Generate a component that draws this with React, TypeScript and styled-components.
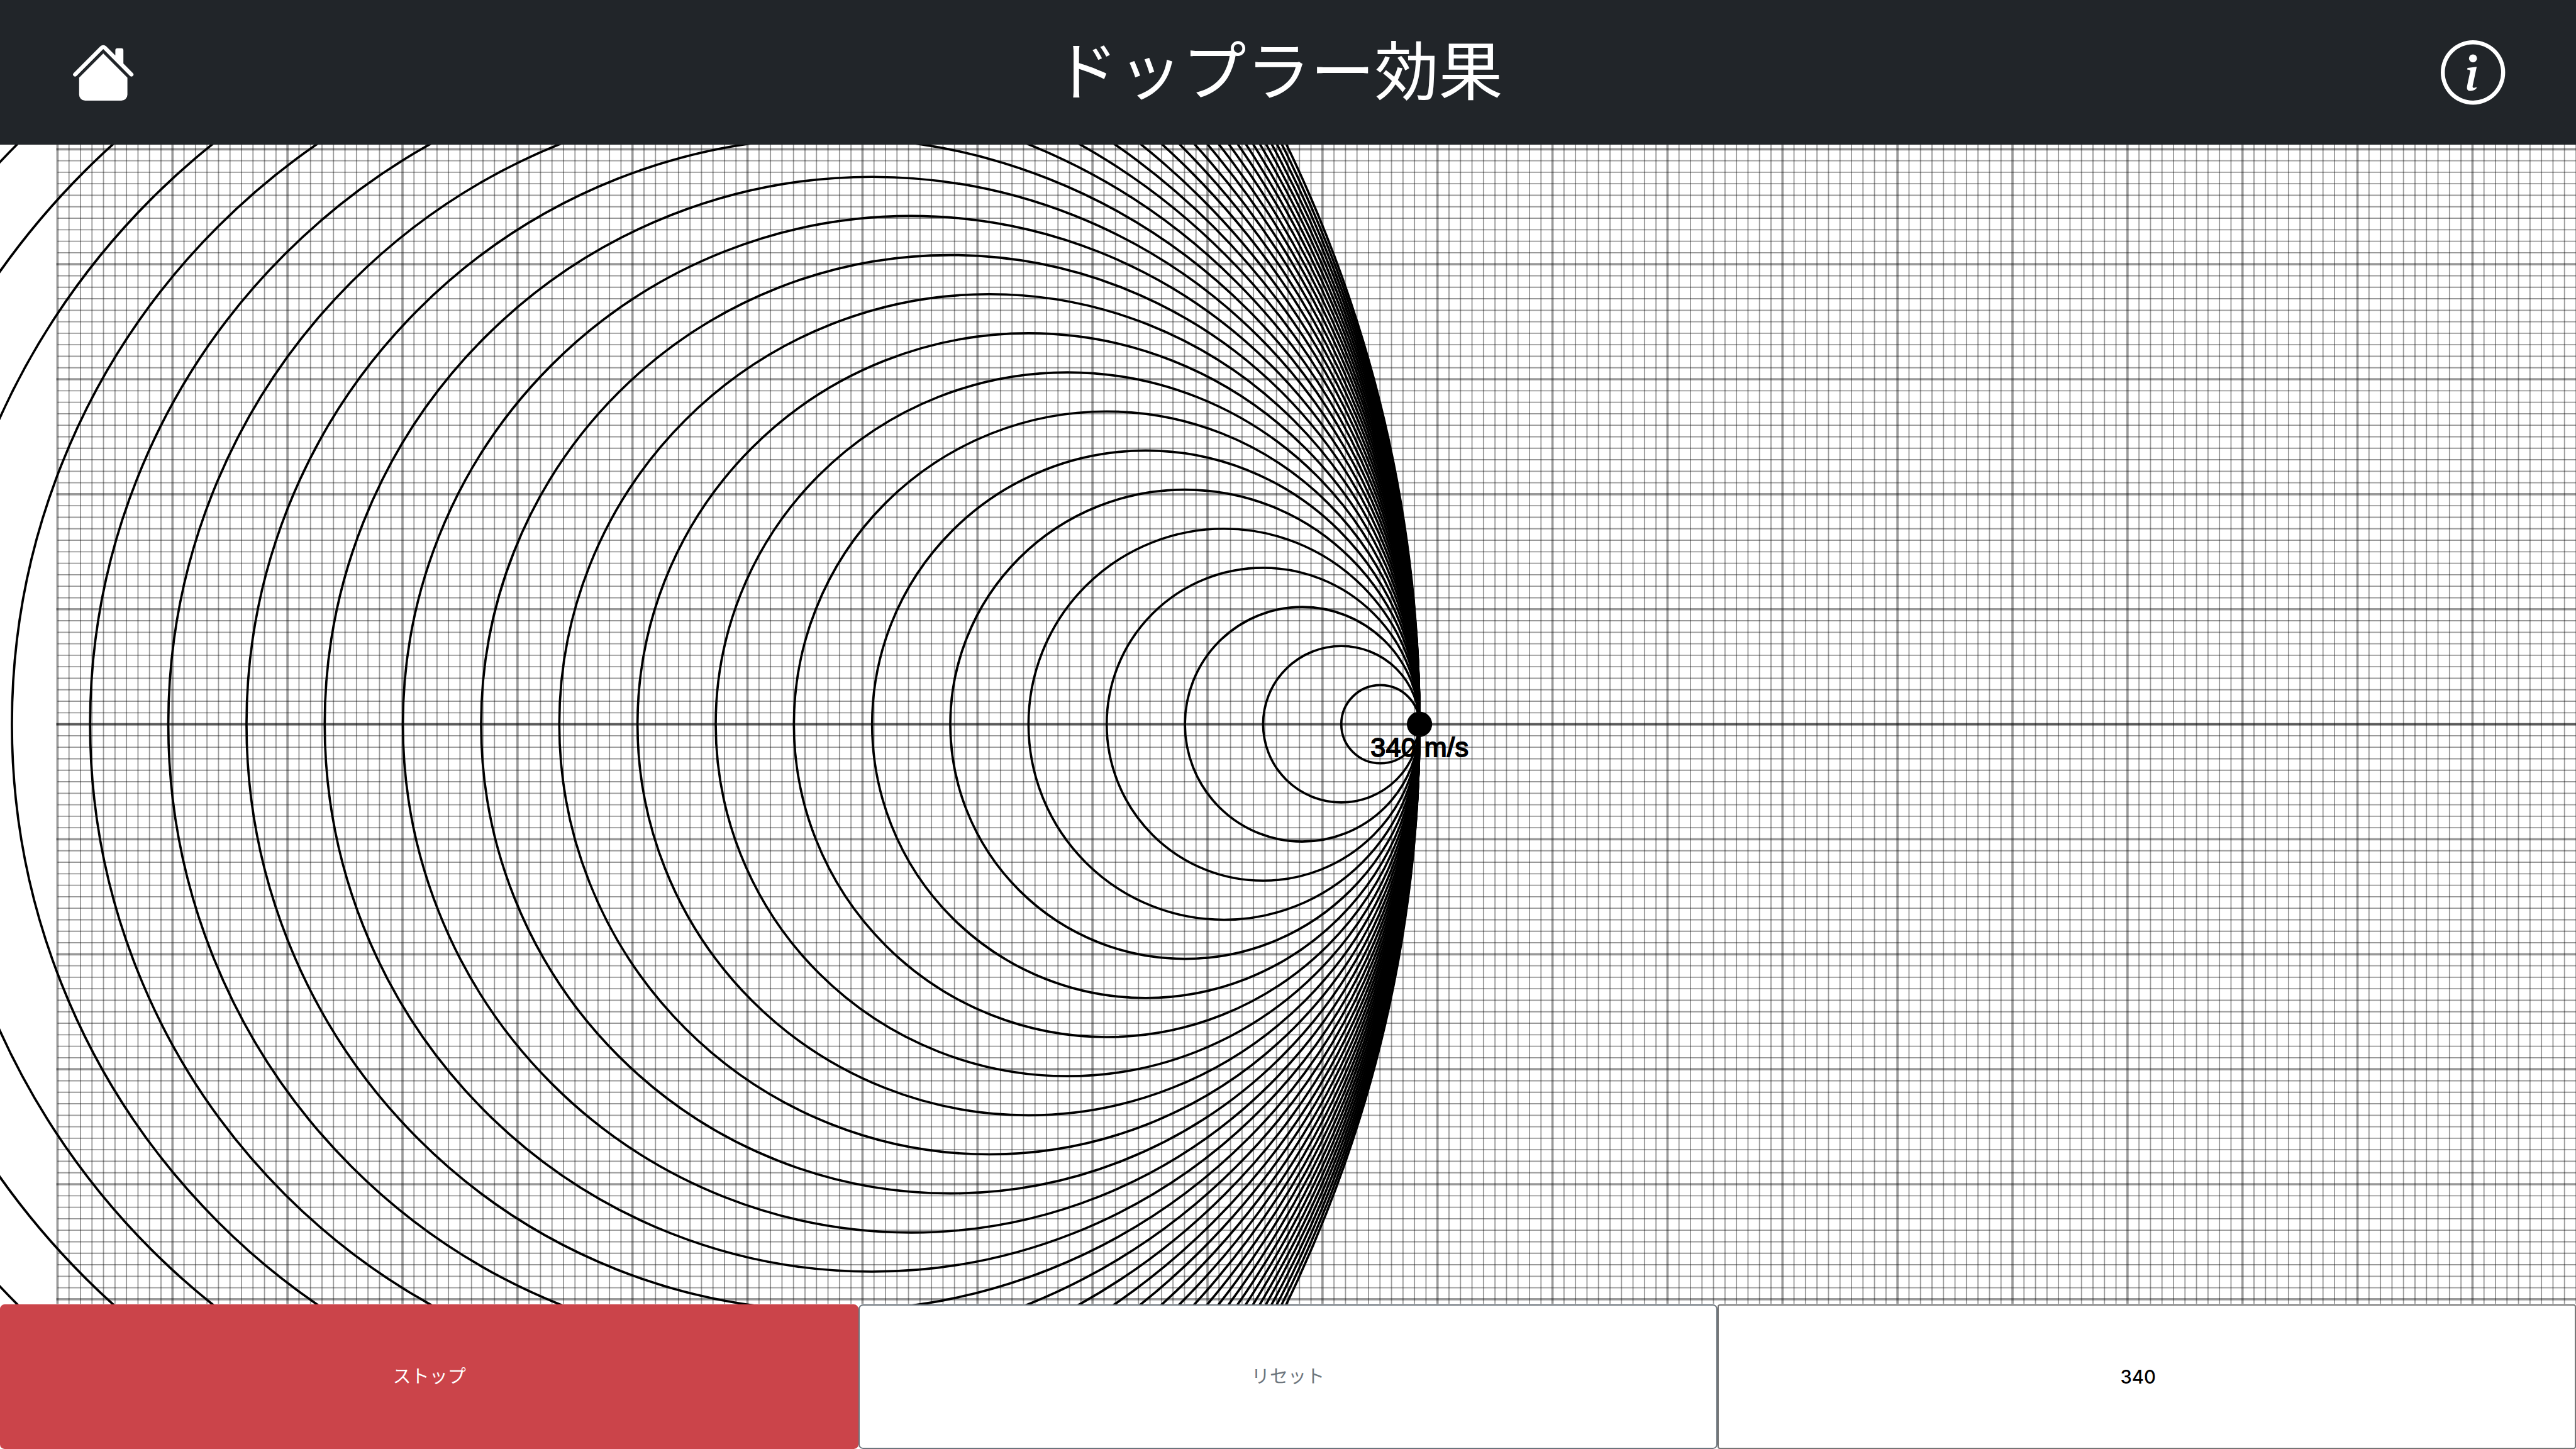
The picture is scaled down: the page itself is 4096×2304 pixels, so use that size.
import React from 'react';
import styled, { createGlobalStyle } from 'styled-components';

const S = 4096 / 4480;
const px = (n: number) => `${n * S}px`;

const Global = createGlobalStyle`
  *, *::before, *::after { box-sizing: border-box; }
  body { margin: 0; background: #fff; overflow: hidden; }
`;

const Page = styled.div`
  width: 4096px;
  height: 2304px;
  display: grid;
  grid-template-rows: ${px(252)} minmax(0, 1fr) ${px(252)};
  overflow: hidden;
  font-family: "Liberation Sans", "Noto Sans CJK JP", sans-serif;
`;

const Header = styled.header`
  background: #212529;
  color: #fff;
  display: flex;
  align-items: center;
  justify-content: space-between;
  padding: 0 ${px(123)} 0 ${px(123.6)};
`;

const Title = styled.h1`
  margin: 0;
  padding: 0 ${px(34)} ${px(17)} 0;
  font-family: "Noto Sans CJK JP", sans-serif;
  font-weight: 400;
  font-size: ${px(111.5)};
  line-height: 1;
  white-space: nowrap;
`;

const IconButton = styled.button`
  width: ${px(112)};
  height: ${px(112)};
  padding: 0;
  border: 0;
  background: none;
  color: inherit;
  svg { display: block; width: 100%; height: 100%; overflow: visible; }
`;

const Stage = styled.main`
  overflow: hidden;
  background: #fff;
  svg { display: block; width: 100%; height: 100%; }
`;

const Speed = styled.text`
  font: 400 47px "Liberation Sans", sans-serif;
  letter-spacing: 0.5px;
  stroke: #000;
  stroke-width: 2px;
`;

const Footer = styled.footer`
  display: grid;
  grid-template-columns: repeat(3, minmax(0, 1fr));
`;

const Control = styled.button<{ $color: string; $bg: string; $border: string }>`
  border: 2px solid ${(p) => p.$border};
  border-radius: ${px(8)};
  background: ${(p) => p.$bg};
  color: ${(p) => p.$color};
  font-family: "Noto Sans CJK JP", sans-serif;
  font-size: ${px(31.8)};
  line-height: 1.5;
  padding: 0 0 ${px(5)};
`;

const SpeedInput = styled.input`
  min-width: 0;
  width: 100%;
  border: 2px solid #767676;
  border-radius: ${px(4)};
  background: #fff;
  color: #000;
  padding: ${px(2)} ${px(30)} 0 0;
  text-align: center;
  font: 500 ${px(32)} Inter, sans-serif;
`;

const range = (n: number) => Array.from({ length: n }, (_, i) => i);
const SOURCE = 2468.7;
const AXIS = 1260;
const STEP = 68;

const Grid = () => (
  <g stroke="#000" strokeOpacity={0.4}>
    {range(220).map((i) => (
      <line key={`v${i}`} x1={100 + i * 20} x2={100 + i * 20} y1={252} y2={2268} strokeWidth={i % 10 ? 2 : 4} />
    ))}
    {range(101).map((i) => (
      <line key={`h${i}`} x1={i % 10 ? 100 : 98} x2={4480} y1={260 + i * 20} y2={260 + i * 20} strokeWidth={i % 10 ? 2 : 4} />
    ))}
    <line x1={98} x2={4480} y1={AXIS} y2={AXIS} strokeWidth={4} />
  </g>
);

const Waves = () => (
  <g fill="none" stroke="#000" strokeWidth={4}>
    {range(34).map((i) => (
      <circle key={i} cx={SOURCE - STEP * (i + 1)} cy={AXIS} r={STEP * (i + 1)} />
    ))}
  </g>
);

export default function App() {
  return (
    <Page>
      <Global />
      <Header>
        <IconButton aria-label="home">
          <svg viewBox="0 0 16 16" fill="currentColor">
            <path d="M8.707 1.5a1 1 0 0 0-1.414 0L.646 8.146a.5.5 0 0 0 .708.708L8 2.207l6.646 6.647a.5.5 0 0 0 .708-.708L13 5.793V2.5a.5.5 0 0 0-.5-.5h-1a.5.5 0 0 0-.5.5v1.293L8.707 1.5Z" />
            <path d="m8 3.293 6 6V13.5a1.5 1.5 0 0 1-1.5 1.5h-9A1.5 1.5 0 0 1 2 13.5V9.293l6-6Z" />
          </svg>
        </IconButton>
        <Title>ドップラー効果</Title>
        <IconButton aria-label="info">
          <svg viewBox="0 0 16 16" fill="currentColor">
            <path d="M8 15A7 7 0 1 1 8 1a7 7 0 0 1 0 14zm0 1A8 8 0 1 0 8 0a8 8 0 0 0 0 16z" />
            <path d="m8.93 6.588-2.29.287-.082.38.45.083c.294.07.352.176.288.469l-.738 3.468c-.194.897.105 1.319.808 1.319.545 0 1.178-.252 1.465-.598l.088-.416c-.2.176-.492.246-.686.246-.275 0-.375-.193-.304-.533L8.93 6.588zM9 4.5a1 1 0 1 1-2 0 1 1 0 0 1 2 0z" />
          </svg>
        </IconButton>
      </Header>
      <Stage>
        <svg viewBox="0 252 4480 2016">
          <Grid />
          <Waves />
          <circle cx={SOURCE} cy={AXIS} r={22} />
          <Speed x={2469} y={1315.7} textAnchor="middle">340 m/s</Speed>
        </svg>
      </Stage>
      <Footer>
        <Control $color="#fff" $bg="#cb444a" $border="#cb444a">ストップ</Control>
        <Control $color="#6c757d" $bg="#fff" $border="#6c757d">リセット</Control>
        <SpeedInput defaultValue="340" />
      </Footer>
    </Page>
  );
}
